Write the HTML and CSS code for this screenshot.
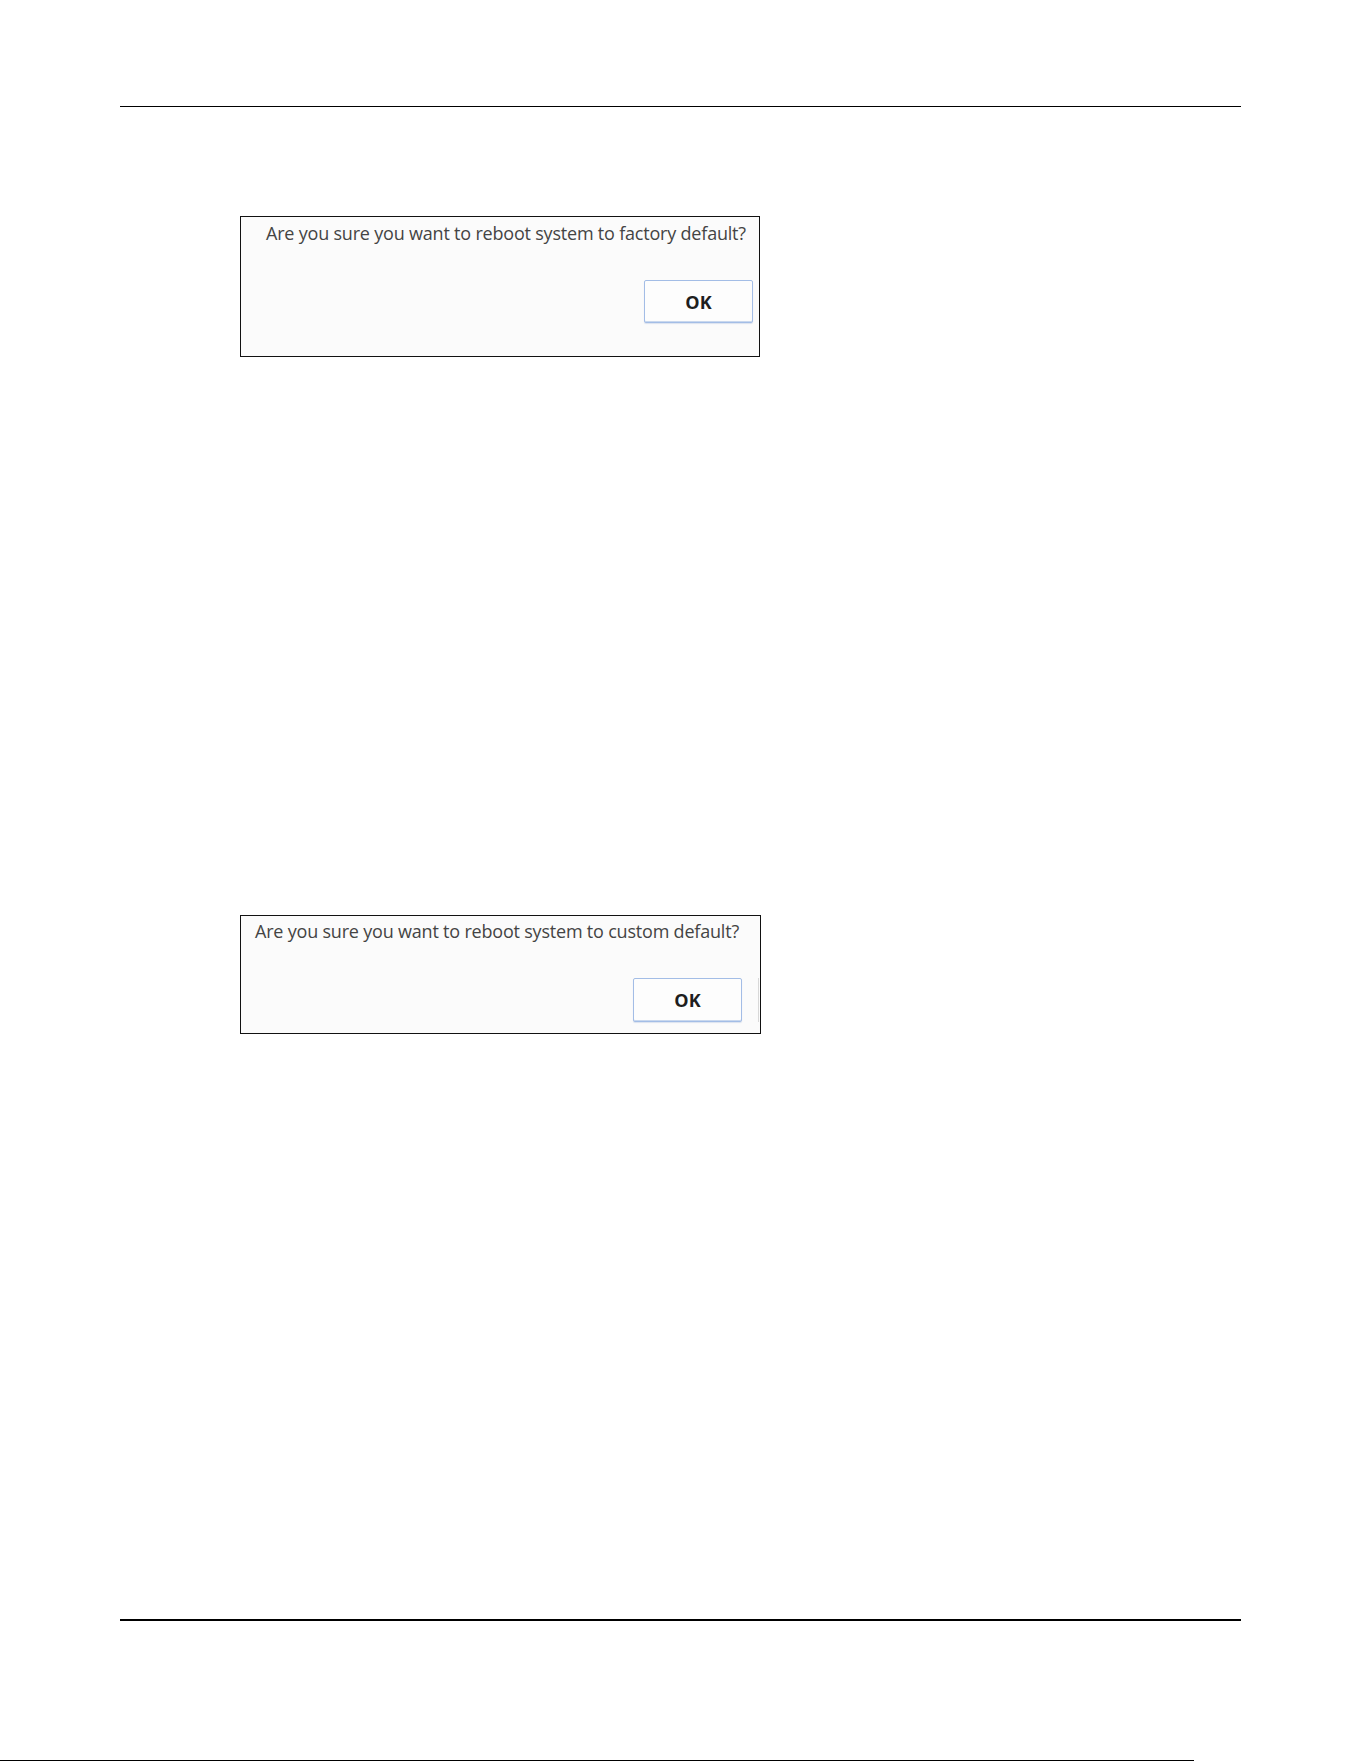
FILE: index.html
```html
<!DOCTYPE html>
<html lang="en">
<head>
<meta charset="utf-8">
<title>Reboot to default</title>
<link rel="stylesheet" href="styles.css">
</head>
<body>
<div class="page">
  <hr class="rule rule-top">

  <div class="content">
    <div class="dialog dialog-factory">
      <p class="dialog-msg">Are you sure you want to reboot system to factory default?</p>
      <button class="dialog-btn" type="button">OK</button>
    </div>

    <div class="dialog dialog-custom">
      <p class="dialog-msg">Are you sure you want to reboot system to custom default?</p>
      <button class="dialog-btn" type="button">OK</button>
    </div>
  </div>

  <hr class="rule rule-bottom">
</div>
<div class="page-edge"></div>
</body>
</html>
```

FILE: styles.css
```css
html, body {
  margin: 0;
  padding: 0;
  background: #ffffff;
}

.page {
  width: 1361px;
  height: 1760px;
  padding-top: 106px;
  box-sizing: border-box;
  display: flex;
  flex-direction: column;
}

.rule {
  margin: 0 0 0 120px;
  width: 1121px;
  border: 0;
  background: #000;
}

.rule-top {
  height: 1px;
}

.rule-bottom {
  height: 2px;
  margin-top: 585px;
}

.content {
  padding-left: 240px;
  display: flex;
  flex-direction: column;
}

.dialog {
  border: 1px solid #111;
  background: #fbfbfb;
  display: flex;
  flex-direction: column;
  box-sizing: border-box;
  font-family: "Open Sans", "Noto Sans", sans-serif;
}

.dialog-factory {
  width: 520px;
  height: 141px;
  margin-top: 109px;
  padding: 6px 6px 0 25px;
}

.dialog-custom {
  width: 521px;
  height: 119px;
  margin-top: 558px;
  padding: 5px 18px 0 14px;
  position: relative;
}

.dialog-custom::after {
  content: "";
  position: absolute;
  right: 1px;
  top: 62px;
  width: 1px;
  height: 44px;
  background: #d8d8d8;
}

.dialog-msg {
  margin: 0;
  font-size: 18px;
  line-height: 20px;
  color: #444;
  white-space: nowrap;
  letter-spacing: -0.2px;
}

.dialog-btn {
  align-self: flex-end;
  margin-top: 37px;
  width: 109px;
  height: 43px;
  border: 1px solid #a3bde6;
  border-radius: 2px;
  background: #fdfdfd;
  box-shadow: inset 0 -1px 0 #c9d8ee, 0 1px 1px rgba(120, 150, 200, 0.25);
  font-family: "Open Sans", "Noto Sans", sans-serif;
  font-weight: 700;
  font-size: 18px;
  color: #1e1e1e;
  padding: 0;
}

.dialog-custom .dialog-btn {
  height: 44px;
}

.page-edge {
  width: 1194px;
  height: 1px;
  background: #000;
}
```
